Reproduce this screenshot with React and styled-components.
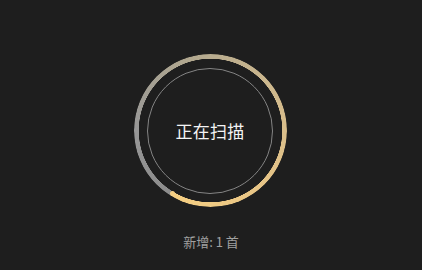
import styled, { createGlobalStyle } from 'styled-components';

// Global -----------------------------------------------------
const GlobalStyle = createGlobalStyle`
  html, body {
    margin: 0;
    padding: 0;
    background: #1e1e1e;
  }
  body {
    font-family: "Noto Sans CJK SC", "Noto Sans", sans-serif;
  }
`

export default function App(){
  const added = 1

  return <>
  <GlobalStyle />
  <Page>
    <Dial>
      <Ring />
      <CapDot />
      <Inner>
        <Status>正在扫描</Status>
      </Inner>
    </Dial>
    <Caption>新增: {added} 首</Caption>
  </Page>
  </>
}

// Styled Components -----------------------------------------
const Page = styled.div`
  width: 422px;
  height: 270px;
  box-sizing: border-box;
  padding-top: 54px;
  display: flex;
  flex-direction: column;
  align-items: center;
`

const Dial = styled.div`
  position: relative;
  width: 153px;
  height: 153px;
  margin-left: -2px;
  display: grid;
  place-items: center;
`

const Ring = styled.div`
  position: absolute;
  inset: 0;
  border-radius: 50%;
  background: conic-gradient(
    from 211deg,
    #8c8c8c 0deg,
    #979797 60deg,
    #b0a78f 130deg,
    #cdb88e 200deg,
    #e6c487 280deg,
    #f6cf82 360deg
  );
  -webkit-mask: radial-gradient(farthest-side, transparent calc(100% - 5px), #000 calc(100% - 4.5px));
  mask: radial-gradient(farthest-side, transparent calc(100% - 5px), #000 calc(100% - 4.5px));
`

const CapDot = styled.div`
  position: absolute;
  left: 36.5px;
  top: 137px;
  width: 5px;
  height: 5px;
  border-radius: 50%;
  background: #f6cf84;
`

const Inner = styled.div`
  position: relative;
  width: 124px;
  height: 124px;
  border: 1px solid #848484;
  border-radius: 50%;
  display: grid;
  place-items: center;
`

const Status = styled.span`
  font-size: 17px;
  color: #f4f4f4;
  letter-spacing: 0.2px;
`

const Caption = styled.p`
  margin: 26px 0 0;
  font-size: 13px;
  line-height: 18px;
  color: #a0a0a0;
`
